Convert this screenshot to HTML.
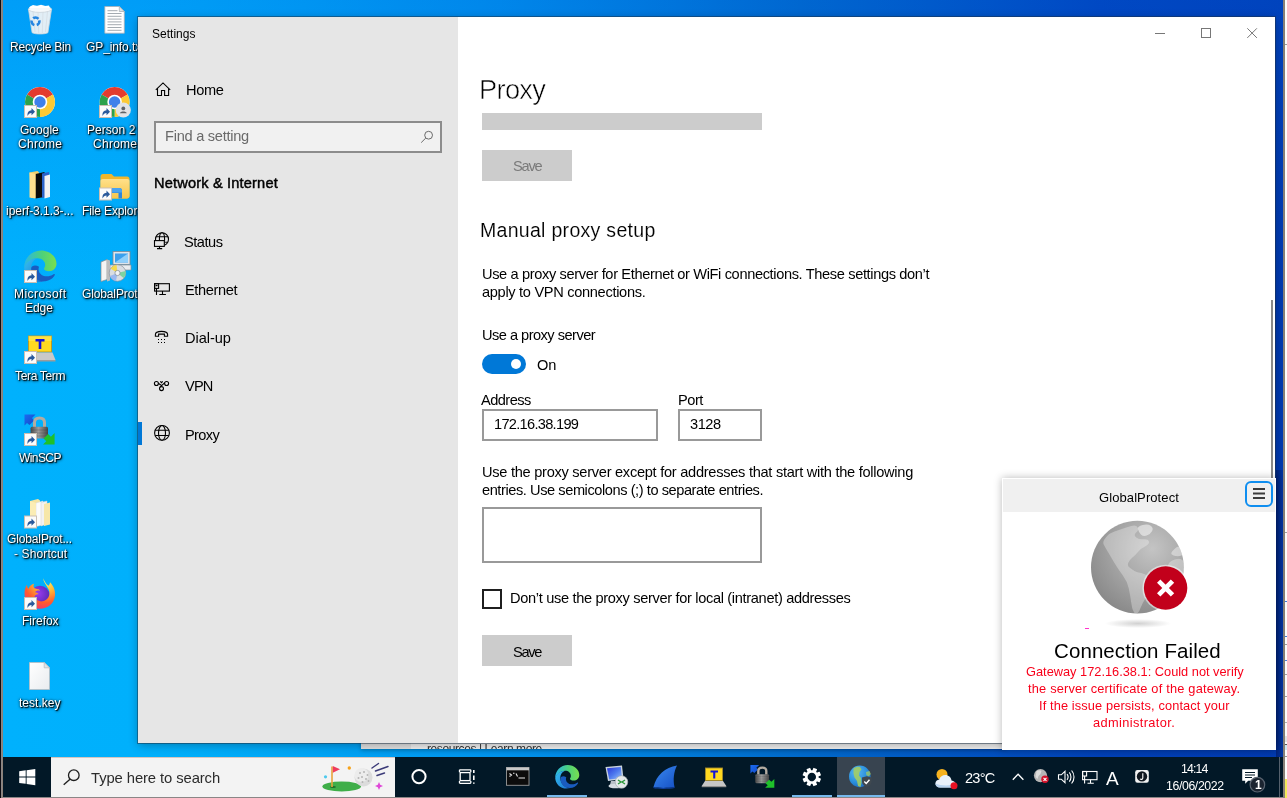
<!DOCTYPE html>
<html lang="en">
<head>
<meta charset="utf-8">
<title>Settings - Proxy</title>
<style>
*{box-sizing:border-box;margin:0;padding:0}
html,body{width:1287px;height:798px;overflow:hidden;background:#8a8686}
#rstrip i{position:absolute;left:0;width:2px;display:block}
#lb{left:0;top:0;width:3px;height:798px;background:linear-gradient(90deg,#0c0a10 0,#0c0a10 1px,#8a8686 1px,#8a8686 2px,#8c8078 2px)}
body{position:relative;font-family:"Liberation Sans",sans-serif;color:#000;font-size:15px}
.a,.t{position:absolute}
.t{white-space:pre;line-height:1;will-change:transform}
svg{position:absolute;overflow:visible}
#desk{position:absolute;left:3px;top:0;width:1280px;height:757px;overflow:hidden;
 background:linear-gradient(180deg,rgba(0,96,232,.24) 0,rgba(0,96,232,.12) 120px,rgba(0,96,232,0) 300px),linear-gradient(90deg,#00b1fd 0px,#00b0fc 135px,#00adf9 197px,#00a5f5 300px,#0092eb 497px,#007cd9 660px,#0069c9 797px,#004ebe 1000px,#0041b8 1097px,#003ab0 1280px)}
#rstrip{left:1283px;top:0;width:4px;height:798px;background:#fdfdfd;border-left:2px solid #888078}
.dl{color:#fff;font-size:12px;text-shadow:1px 1px 1px rgba(0,0,0,.95),1px 1px 3px rgba(0,0,0,.9),0 0 3px rgba(0,0,0,.6)}
#win{left:138px;top:17px;width:1137px;height:726px;background:#fff;box-shadow:0 0 0 1px rgba(30,50,70,.5),0 2px 9px rgba(0,0,0,.3)}
#side{left:138px;top:17px;width:320px;height:726px;background:#e6e6e6}
.box{border:2px solid #999;background:#fff}
.btn{background:#ccc}
#tb{left:3px;top:757px;width:1280px;height:40px;background:#021827}
#pop{left:1002px;top:478px;width:274px;height:272px;background:#fff;box-shadow:0 0 8px rgba(0,0,0,.28)}
</style>
</head>
<body>
<div id="desk">
<svg style="left:0;top:0" width="1280" height="757" viewBox="3 0 1280 757">
 <defs>
  <g id="sc"><rect x="0.5" y="0.5" width="12" height="12" fill="#fbfbfb" stroke="#cbbfb3" stroke-width="1"/><path d="M3.500 11c-.3-3.800 1.300-5.600 4-5.800V3l3.500 3.700-3.500 3.500V8c-1.800.1-3 .9-4 3z" fill="#2a5a9c"/></g>
  <g id="chr"><circle r="15" fill="#fff"/><path d="M0 0L-12.990-7.500A15 15 0 0 1 12.990-7.500z" fill="#e33b2e"/><path d="M0 0L12.990-7.500A15 15 0 0 1 0 15z" fill="#fcc934"/><path d="M0 0L0 15A15 15 0 0 1-12.990-7.500z" fill="#2ca14b"/><path d="M0-7.500H13" stroke="#e33b2e" stroke-width="0"/><circle r="7.300" fill="#fff"/><circle r="5.700" fill="#3f80ea"/></g>
  <linearGradient id="pg" x1="0" y1="0" x2="1" y2="1"><stop offset="0" stop-color="#fff"/><stop offset="1" stop-color="#e9ecef"/></linearGradient>
  <linearGradient id="fy" x1="0" y1="0" x2="0" y2="1"><stop offset="0" stop-color="#ffe08a"/><stop offset="1" stop-color="#f7c64a"/></linearGradient>
 </defs>
 <!-- recycle bin -->
 <path d="M28.500 9.500l3.600 23.200c3 1.700 13 1.700 15.800 0L51.500 9.500z" fill="#edf2f5" fill-opacity=".95" stroke="#cdd6dc" stroke-width=".8"/><path d="M33 11l2 21M38 11.500l.7 21.500M43 11.500l-.7 21.500M47.500 11l-2 21" stroke="#d5dde3" stroke-width=".8"/>
 <ellipse cx="40" cy="9.200" rx="11.600" ry="3.200" fill="#f6f9fb" stroke="#c9d3da" stroke-width=".8"/>
 <path d="M30 6.500l3-1.500 4 1 4-1.200 4 1.200 4-.6 1 2.600H29z" fill="#fff"/>
 <g transform="translate(-4.3 .8)"><circle cx="39.8" cy="20.6" r="3.9" fill="none" stroke="#2585e0" stroke-width="2.6" stroke-dasharray="5.7 2.47" transform="rotate(-15 39.8 20.6)"/></g>
 <!-- GP_info.txt -->
 <path d="M104.800 6.500h14.500l5 5v21.700h-19.500z" fill="#fff" stroke="#a9b0b6" stroke-width=".8"/><path d="M119.300 6.500v5h5z" fill="#dfe3e6" stroke="#a9b0b6" stroke-width=".8"/>
 <path d="M107.500 13.500h14M107.500 16.300h14M107.500 19.100h14M107.500 21.900h14M107.500 24.700h14M107.500 27.500h14M107.500 30.300h14M107.500 10.700h10" stroke="#9aa1a8" stroke-width=".9"/>
 <!-- chrome -->
 <use href="#chr" x="40" y="102"/><use href="#sc" x="24" y="105"/>
 <use href="#chr" x="114.600" y="102"/><use href="#sc" x="99" y="105"/>
 <circle cx="123.300" cy="110" r="7.600" fill="#e1e3e6"/><circle cx="123.300" cy="108.400" r="1.900" fill="#5f6368"/><path d="M119.800 113.300c.5-2.300 6.500-2.300 7 0z" fill="#5f6368"/>
 <!-- iperf folder -->
 <path d="M29.500 172.500l8-1.500 1.500 1.500v25l-8 .5z" fill="#f3cf6b"/><path d="M35.500 174l9-2v25l-9 1.500z" fill="#0b0b0b"/><path d="M42 173.500l7-1.500v24l-7 2z" fill="#2a62c9"/><path d="M44.500 176l5.500-1.500v22.500l-5.500 1.500z" fill="#f2f2f2"/><path d="M29.500 172.500l6 1.500v24.500l-6-1z" fill="#ffe08f"/>
 <!-- file explorer -->
 <path d="M100.500 176.500c0-1.500 1-2.500 2.500-2.500h8.500l2.500 2.500h13c1.500 0 2.500 1 2.500 2.500v17c0 1.500-1 2.500-2.500 2.500h-24c-1.500 0-2.500-1-2.500-2.500z" fill="#f0b62c"/>
 <path d="M100.500 181c0-1.200 1-2 2.200-2h24.600c1.200 0 2.200.8 2.200 2v15c0 1.500-1 2.500-2.500 2.500h-24c-1.500 0-2.500-1-2.500-2.500z" fill="url(#fy)"/>
 <path d="M108 190.500c0-1.500 1-2.500 2.500-2.500h9c1.500 0 2.500 1 2.500 2.500v8h-3.500v-5.500h-7v5.500H108z" fill="#2f86d9"/><path d="M108 190.500c0-1.500 1-2.500 2.500-2.500h9c1.500 0 2.500 1 2.500 2.500v2h-14z" fill="#4aa3ee"/>
 <use href="#sc" x="99" y="187.500"/>
 <!-- edge -->
 <g transform="translate(40 266.200)">
  <defs><linearGradient id="e1" x1="0" y1="0" x2="1" y2="1"><stop offset="0" stop-color="#35c1f1"/><stop offset="1" stop-color="#1b6fd1"/></linearGradient><linearGradient id="e2" x1="0" y1="0" x2="1" y2="0"><stop offset="0" stop-color="#2bb6e6"/><stop offset=".55" stop-color="#4dd17a"/><stop offset="1" stop-color="#7adf4e"/></linearGradient></defs>
  <path d="M-15.800 1.500C-16-8 -8.500-15.800 1-15.800c8.500 0 15.500 6 15.500 13.300 0 4.500-3.500 7.500-7.500 7.500-3 0-5-1-5-2.500 0-1 1.200-1.500 1.200-3.700C5.200-5.200 2-8 -2.500-8c-6 0-10.800 4.500-13.300 9.500z" fill="url(#e2)"/>
  <path d="M-15.800 1.500c2-5.500 7-9.500 13-9.500C-7.500-6-10-1-8.500 5c1.500 6 7 10 13 10.200-2 .5-3.500.6-5 .6C-9.500 15.800-15.500 9-15.800 1.500z" fill="url(#e1)"/>
  <path d="M-8.800 2c-.5 7 4.500 13 12.500 13 5 0 9-2.500 11-6 .5-1-.5-1.500-1.200-1C11 9.800 8 10.500 5 10c-5-1-7.500-5.500-6-9.500C-4-1.500-8.500-1-8.800 2z" fill="#1a5cc0"/>
 </g>
 <use href="#sc" x="24" y="270"/>
 <!-- globalprotect installer -->
 <rect x="113" y="251.500" width="17" height="13" fill="#dfe4ea" stroke="#7c8894" stroke-width=".8"/><rect x="115" y="253.500" width="13" height="9" fill="#3aa0ee"/><path d="M115 262.500l13-9v9z" fill="#8fd0fb"/>
 <path d="M110 265h21v5h-21z" fill="#e9edf0" stroke="#8a949c" stroke-width=".7"/>
 <path d="M101 262l6-2.500v20l-6 2z" fill="#f4f4f4" stroke="#8a8a8a" stroke-width=".7"/><path d="M107 259.500l3 1v20l-3 1z" fill="#bdbdbd"/>
 <circle cx="117.500" cy="273" r="8.300" fill="#d9dde2" stroke="#8c949c" stroke-width=".7"/><path d="M117.500 273l-7-4.500a8.300 8.300 0 0 1 6-3.700z" fill="#f5d94e"/><path d="M117.500 273l8-2a8.300 8.300 0 0 1-2 7z" fill="#7ed3a0"/><path d="M117.500 273l-1.500 8a8.300 8.300 0 0 1-6-5z" fill="#9bb8f0"/><circle cx="117.500" cy="273" r="2.600" fill="#f1f3f5" stroke="#7d868e" stroke-width=".7"/>
 <!-- tera term -->
 <rect x="28.500" y="336" width="23" height="16" fill="#ffd81f" stroke="#b89a2a" stroke-width="1"/><path d="M28.500 336h23v5h-23z" fill="#ffe85a" fill-opacity=".6"/>
 <path d="M35.500 339h9v2.400h-3.200v7.600h-2.600v-7.600h-3.200z" fill="#1212d8"/>
 <path d="M27.500 352.500h25l3 7.500h-31z" fill="#c9c9c9"/><path d="M24.500 360h31v1.500h-31z" fill="#9b9b9b"/>
 <use href="#sc" x="24" y="351"/>
 <!-- winscp -->
 <defs><linearGradient id="lk" x1="0" y1="0" x2="1" y2="0"><stop offset="0" stop-color="#4a4a4a"/><stop offset=".45" stop-color="#9c9c9c"/><stop offset="1" stop-color="#484848"/></linearGradient><linearGradient id="ba" x1="0" y1="0" x2="1" y2="1"><stop offset="0" stop-color="#1c6cf0"/><stop offset="1" stop-color="#1148c8"/></linearGradient></defs>
 <g id="wscp"><path d="M24.5 414.500h11l-3.500 3.500 2 2.500-4.500 4.500-2.500-2-2.500 2.600z" fill="url(#ba)"/>
 <path d="M34.500 427.500v-5c0-3.200 2.200-4.500 5-4.500s5 1.300 5 4.500v5" fill="none" stroke="#b3aba1" stroke-width="3"/>
 <rect x="30.600" y="426.700" width="17.400" height="11.800" rx="1.500" fill="url(#lk)"/><path d="M30.600 430h17.400M30.600 433h17.400M30.600 436h17.400" stroke="#333" stroke-width=".6" stroke-opacity=".45"/>
 <path d="M54.600 444.600h-11.600l3.300-3.300-2.800-2.800 4.600-4.600 2.800 2.800 3.700-3.700z" fill="#1fc02a"/></g>
 <use href="#sc" x="24" y="433"/>
 <!-- globalprot folder shortcut -->
 <path d="M30 501l8-2 2 1.500v24l-10 1.500z" fill="#f5e3a0"/><path d="M36 503l7-2v24l-7 1.500z" fill="#fbfbfb" stroke="#d7d7d7" stroke-width=".5"/><path d="M41 502.500l6-1.500v23l-6 2z" fill="#f2f2f2" stroke="#d0d0d0" stroke-width=".5"/><path d="M44 504l6-1.500v22l-6 1.500z" fill="#f7e7a8"/><path d="M30 501l6 2v23l-6-.5z" fill="#fbedb5"/>
 <use href="#sc" x="24" y="515.500"/>
 <!-- firefox -->
 <g transform="translate(40 593.800)">
  <defs><radialGradient id="f1" cx=".7" cy=".1" r="1"><stop offset="0" stop-color="#fff36a"/><stop offset=".35" stop-color="#ffb534"/><stop offset=".7" stop-color="#ff5b2e"/><stop offset="1" stop-color="#f2317a"/></radialGradient><radialGradient id="f2" cx=".4" cy=".4" r=".6"><stop offset="0" stop-color="#9a3bf0"/><stop offset="1" stop-color="#5d2bb8"/></radialGradient></defs>
  <circle cx="0" cy="1.500" r="9.500" fill="url(#f2)"/>
  <path d="M3-15.500c2 3 2.500 5.500 5.500 7.500 1.500-1.500 1.500-3.500 1.500-3.500 4 4 5.500 9 5 13.500C14 10 7.500 15 0 15-8.500 15-15.500 8.500-15.500 0c0-4 1-7 2.500-9 0 1.500.5 3 1.500 4 1-3 3.500-4.500 5.500-5-1 2-.5 3.500.5 4.500 2 1 5 .5 5.500 2.500-2-.5-4 0-5 1.500 2 0 3 1 3.500 2-1.500 0-3.500.5-4 2.500 1.500 3.500 5 5 8 4.500 4-.5 7-4 7-8 0-5.500-5-8-6.500-15z" fill="url(#f1)"/>
 </g>
 <use href="#sc" x="24" y="597"/>
 <!-- test.key -->
 <path d="M29.500 662.500h14.700l5.300 5.300v21.700h-20z" fill="url(#pg)" stroke="#b9bec3" stroke-width=".8"/><path d="M44.200 662.500v5.300h5.300z" fill="#e1e4e7" stroke="#b9bec3" stroke-width=".8"/>
</svg>
<span class="t dl" style="left:6.68px;top:41.34px;letter-spacing:-0.22px">Recycle Bin</span>
<span class="t dl" style="left:82.88px;top:41.34px;letter-spacing:-0.1px">GP_info.txt</span>
<span class="t dl" style="left:16.98px;top:123.64px;letter-spacing:0.02px">Google</span>
<span class="t dl" style="left:14.78px;top:138.24px;letter-spacing:0.27px">Chrome</span>
<span class="t dl" style="left:84.48px;top:123.64px;letter-spacing:0.04px">Person 2 -</span>
<span class="t dl" style="left:89.58px;top:138.24px;letter-spacing:0.27px">Chrome</span>
<span class="t dl" style="left:3.28px;top:205.34px;letter-spacing:-0.04px">iperf-3.1.3-...</span>
<span class="t dl" style="left:79.48px;top:205.34px;letter-spacing:-0.13px">File Explorer</span>
<span class="t dl" style="left:10.68px;top:287.64px;letter-spacing:0.43px">Microsoft</span>
<span class="t dl" style="left:22.28px;top:302.24px;letter-spacing:-0.07px">Edge</span>
<span class="t dl" style="left:78.88px;top:287.64px;letter-spacing:-0.13px">GlobalProt...</span>
<span class="t dl" style="left:12.28px;top:370.04px;letter-spacing:-0.33px">Tera Term</span>
<span class="t dl" style="left:15.78px;top:451.64px;letter-spacing:-0.58px">WinSCP</span>
<span class="t dl" style="left:4.28px;top:533.44px;letter-spacing:-0.13px">GlobalProt...</span>
<span class="t dl" style="left:10.68px;top:548.04px;letter-spacing:0.12px">- Shortcut</span>
<span class="t dl" style="left:18.78px;top:615.24px;letter-spacing:-0.01px">Firefox</span>
<span class="t dl" style="left:16.28px;top:697.44px;letter-spacing:0.02px">test.key</span>
</div>
<div id="rstrip" class="a"><i style="top:44px;height:1px;background:#9a9a9a"></i><i style="top:532px;height:1px;background:#a0a0a0"></i><i style="top:601px;height:1px;background:#3c78d8"></i><i style="top:636px;height:1px;background:#3c78d8"></i><i style="top:644px;height:1px;background:#9a9a9a"></i><i style="top:660px;height:1px;background:#4a80d8"></i><i style="top:674px;height:1px;background:#a0a0a0"></i><i style="top:696px;height:1px;background:#a0a0a0"></i><i style="top:722px;height:1px;background:#b0b0b0"></i><i style="top:736px;height:6px;background:#e4e4e4"></i><i style="top:744px;height:1px;background:#555"></i><i style="top:745px;height:5px;background:#cfeaf2"></i><i style="top:756px;height:1px;background:#999"></i><i style="top:779px;height:19px;background:#f4ec5a"></i></div>
<div id="lb" class="a"></div>

<!-- window behind -->
<div class="a" style="left:361px;top:735px;width:645px;height:14px;background:#f0f0f0;box-shadow:0 1px 4px rgba(0,0,0,.3)"></div>
<div class="a" style="left:361px;top:735px;width:50px;height:14px;background:#e1e1e1"></div>
<div class="a" style="left:361px;top:743px;width:645px;height:6px;overflow:hidden"><div class="a" style="left:-361px;top:-743px"><span class="t" style="left:427.28px;top:742.84px;font-size:12px;letter-spacing:-0.41px;color:#333">resources | Learn more</span></div></div>

<!-- SETTINGS WINDOW -->
<div id="win" class="a"></div>
<div id="side" class="a"></div>
<span class="t" style="left:151.58px;top:28.34px;font-size:12px;letter-spacing:0.01px;color:#000">Settings</span>
<!-- caption buttons -->
<svg style="left:1150px;top:24px" width="112" height="18" viewBox="0 0 112 18" fill="none" stroke="#777" stroke-width="1">
 <path d="M5 9.5h10"/><rect x="51.5" y="4.5" width="9" height="9"/><path d="M97.3 4.3l9.6 9.6M106.9 4.3l-9.6 9.6"/>
</svg>
<span class="t" style="left:185.52px;top:83.34px;font-size:14.6px;letter-spacing:-0.34px;color:#000">Home</span>
<div class="a" style="left:154px;top:121px;width:288px;height:32px;border:2px solid #8c8c8c;background:#f1f1f1"></div>
<span class="t" style="left:165.42px;top:129.14px;font-size:14.6px;letter-spacing:-0.26px;color:#6a6a6a">Find a setting</span>
<svg style="left:0;top:0" width="1287" height="798" viewBox="0 0 1287 798" fill="none" stroke="#000" stroke-width="1.1" stroke-linejoin="miter">
 <!-- home -->
 <path d="M155.8 89.8L163 82.9l7.2 6.9M157.5 88.6v6.9h4v-5h3.1v5h4v-6.9"/>
 <!-- search magnifier -->
 <g stroke="#6a6a6a" stroke-width="1"><circle cx="428.6" cy="135.2" r="3.9"/><path d="M425.8 138l-4.6 4.6"/></g>
 <!-- status -->
 <circle cx="162" cy="239.3" r="6.5"/><ellipse cx="162" cy="239.3" rx="2.6" ry="6.5"/><path d="M156 236.8h12M165.2 242.3h2.8"/>
 <rect x="154.5" y="240.6" width="9.8" height="5.8" fill="#e6e6e6"/><path d="M159.5 246.4v2.2M157 248.6h5.2"/>
 <!-- ethernet -->
 <rect x="154.6" y="283.7" width="14.8" height="7.4"/><rect x="154.6" y="283.7" width="4" height="4.7"/><path d="M155.6 285.6h2M156.5 288.4v6.6M162.5 291.1v3.4M159.3 294.5h6.6"/>
 <!-- dial-up -->
 <path d="M155.4 336.2v-1.6c0-2 3-3.2 6.1-3.2s6.100 1.200 6.100 3.200v1.600h-3.2v-2.100h-5.800v2.100z"/>
 <g fill="#000" stroke="none"><rect x="158" y="339" width="1" height="1"/><rect x="161" y="339" width="1" height="1"/><rect x="164" y="339" width="1" height="1"/><rect x="158" y="342" width="1" height="1"/><rect x="161" y="342" width="1" height="1"/><rect x="164" y="342" width="1" height="1"/></g>
 <!-- vpn -->
 <circle cx="156.4" cy="383.5" r="2"/><circle cx="166.6" cy="383.5" r="2"/><circle cx="161.5" cy="388.6" r="2"/>
 <path d="M158.300 383.300l3.200 2.200M164.800 382.600l-4.800 4.600M160.300 381.300l1.200 1.400 1.200-1.400"/>
 <!-- proxy globe -->
 <circle cx="162" cy="432.900" r="7.400"/><ellipse cx="162" cy="432.900" rx="3.500" ry="7.400"/><path d="M155.200 430.300h13.600M155.200 435.500h13.600"/>
</svg>
<span class="t" style="left:153.62px;top:176.14px;font-size:14.6px;letter-spacing:0.17px;color:#000;-webkit-text-stroke:0.45px #000">Network &amp; Internet</span>
<span class="t" style="left:184.32px;top:235.14px;font-size:14.6px;letter-spacing:-0.49px;color:#000">Status</span>
<span class="t" style="left:184.52px;top:283.34px;font-size:14.6px;letter-spacing:-0.38px;color:#000">Ethernet</span>
<span class="t" style="left:184.52px;top:331.44px;font-size:14.6px;letter-spacing:-0.05px;color:#000">Dial-up</span>
<span class="t" style="left:184.72px;top:379.44px;font-size:14.6px;letter-spacing:-0.85px;color:#000">VPN</span>
<div class="a" style="left:138px;top:422px;width:4px;height:23px;background:#0078d7"></div>
<span class="t" style="left:184.52px;top:427.54px;font-size:14.6px;letter-spacing:-0.63px;color:#000">Proxy</span>

<!-- content -->
<span class="t" style="left:478.67px;top:75.78px;font-size:27.2px;letter-spacing:-0.65px;color:#000;-webkit-text-stroke:0.55px #fff">Proxy</span>
<div class="a btn" style="left:482px;top:113px;width:280px;height:17px"></div>
<div class="a btn" style="left:482px;top:150px;width:90px;height:31px"></div>
<span class="t" style="left:512.52px;top:158.94px;font-size:14.6px;letter-spacing:-1.22px;color:#7a7a7a">Save</span>
<span class="t" style="left:480.43px;top:221.39px;font-size:19.5px;letter-spacing:0.3px;color:#000;-webkit-text-stroke:0.12px #fff">Manual proxy setup</span>
<span class="t" style="left:481.72px;top:267.44px;font-size:14.6px;letter-spacing:-0.36px;color:#000">Use a proxy server for Ethernet or WiFi connections. These settings don’t</span>
<span class="t" style="left:481.72px;top:285.34px;font-size:14.6px;letter-spacing:-0.31px;color:#000">apply to VPN connections.</span>
<span class="t" style="left:481.72px;top:328.34px;font-size:14.6px;letter-spacing:-0.52px;color:#000">Use a proxy server</span>
<div class="a" style="left:482px;top:354px;width:44px;height:20px;border-radius:10px;background:#0078d7"></div>
<div class="a" style="left:511px;top:359px;width:10px;height:10px;border-radius:5px;background:#fff"></div>
<span class="t" style="left:537.32px;top:357.94px;font-size:14.6px;letter-spacing:-0.06px;color:#000">On</span>
<span class="t" style="left:481.42px;top:393.04px;font-size:14.6px;letter-spacing:-0.54px;color:#000">Address</span>
<span class="t" style="left:677.92px;top:393.04px;font-size:14.6px;letter-spacing:-0.45px;color:#000">Port</span>
<div class="a box" style="left:482px;top:409px;width:176px;height:32px"></div>
<div class="a box" style="left:678px;top:409px;width:84px;height:32px"></div>
<span class="t" style="left:494.12px;top:417.14px;font-size:14.6px;letter-spacing:-0.7px;color:#000">172.16.38.199</span>
<span class="t" style="left:689.62px;top:417.14px;font-size:14.6px;letter-spacing:-0.49px;color:#000">3128</span>
<span class="t" style="left:481.72px;top:465.14px;font-size:14.6px;letter-spacing:-0.27px;color:#000">Use the proxy server except for addresses that start with the following</span>
<span class="t" style="left:481.72px;top:483.24px;font-size:14.6px;letter-spacing:-0.43px;color:#000">entries. Use semicolons (;) to separate entries.</span>
<div class="a box" style="left:482px;top:507px;width:280px;height:56px"></div>
<div class="a" style="left:482px;top:589px;width:20px;height:20px;border:2px solid #1f1f1f;background:#fff"></div>
<span class="t" style="left:509.92px;top:591.04px;font-size:14.6px;letter-spacing:-0.33px;color:#000">Don’t use the proxy server for local (intranet) addresses</span>
<div class="a btn" style="left:482px;top:635px;width:90px;height:31px"></div>
<span class="t" style="left:512.52px;top:644.64px;font-size:14.6px;letter-spacing:-1.29px;color:#000">Save</span>
<!-- scrollbar thumb -->
<div class="a" style="left:1271px;top:300px;width:2px;height:178px;background:#8a8a8a"></div>

<!-- GLOBALPROTECT POPUP -->
<div class="a" style="left:1276px;top:470px;width:7px;height:287px;background:linear-gradient(90deg,rgba(0,0,40,.38),rgba(0,0,40,.1))"></div>
<div id="pop" class="a"></div>
<div class="a" style="left:1003px;top:479px;width:272px;height:33px;background:#f0f0f0"></div>
<span class="t" style="left:1098.72px;top:490.5px;font-size:13px;letter-spacing:0.09px;color:#000">GlobalProtect</span>
<div class="a" style="left:1245px;top:481px;width:28px;height:26px;border:2px solid #0f8ef0;border-radius:6px;background:#f0f0f0"></div>
<div class="a" style="left:1253px;top:488px;width:12px;height:2px;background:#3c3c3c;box-shadow:0 4.5px 0 #3c3c3c,0 9px 0 #3c3c3c"></div>
<svg style="left:1080px;top:514px" width="120" height="120" viewBox="1080 514 120 120">
 <defs>
  <radialGradient id="gg" cx="0.66" cy="0.3" r="0.85"><stop offset="0" stop-color="#c4c4c4"/><stop offset="0.4" stop-color="#aaa"/><stop offset="1" stop-color="#828282"/></radialGradient>
  <radialGradient id="gs" cx="0.5" cy="0.5" r="0.5"><stop offset="0" stop-color="#999" stop-opacity=".45"/><stop offset="1" stop-color="#999" stop-opacity="0"/></radialGradient>
  <clipPath id="gc"><circle cx="1137.4" cy="567.2" r="46.4"/></clipPath>
 </defs>
 <ellipse cx="1138" cy="623.5" rx="33" ry="4.500" fill="url(#gs)"/>
 <circle cx="1137.4" cy="567.2" r="46.4" fill="url(#gg)"/>
 <g clip-path="url(#gc)" fill="#fff">
  <path fill-opacity=".3" d="M1108.3 534.7Q1110.1 533.2 1118.2 530.3Q1126.2 527.5 1131.2 526.1Q1136.2 524.7 1137.7 527.4Q1139.2 530.1 1136.2 532.6Q1133.2 535.2 1136.2 537.4Q1139.2 539.6 1143.7 539.2Q1148.2 538.8 1148.9 541.5Q1149.6 544.2 1145.4 546.2Q1141.2 548.2 1138.2 551.7Q1135.2 555.2 1132.2 557.7Q1129.2 560.2 1128.2 562.9Q1127.2 565.6 1129.5 567.6Q1131.8 569.6 1134.5 570.9Q1137.2 572.3 1141.2 573.1Q1145.2 573.9 1148.2 576.6Q1151.2 579.3 1150.7 585.3Q1150.2 591.3 1146.2 597.3Q1142.2 603.3 1140.2 608.8Q1138.2 614.4 1135.4 613.4Q1132.6 612.4 1131.4 603.8Q1130.2 595.3 1128.7 588.3Q1127.2 581.3 1122.7 575.3Q1118.2 569.2 1114.6 563.2Q1111.1 557.2 1108.1 552.2Q1105.1 547.2 1103.8 544.7Q1102.5 542.2 1104.5 539.2Q1106.5 536.2 1108.3 534.7z"/>
  <path fill-opacity=".5" d="M1137.9 529.1Q1137.2 526.1 1142.7 524.9Q1148.2 523.7 1151.0 525.9Q1153.8 528.1 1152.0 531.3Q1150.2 534.6 1146.7 535.6Q1143.2 536.6 1140.9 534.4Q1138.6 532.1 1137.9 529.1z"/>
  <path fill-opacity=".4" d="M1171.5 552.6Q1172.3 550.8 1175.3 548.2Q1178.3 545.6 1180.5 547.6Q1182.7 549.6 1183.0 552.6Q1183.3 555.6 1179.8 556.1Q1176.3 556.6 1173.5 555.5Q1170.7 554.4 1171.5 552.6z"/>
  <path fill-opacity=".3" d="M1168.3 564.4Q1169.3 561.6 1174.8 559.6Q1180.3 557.6 1182.8 560.4Q1185.3 563.2 1185.3 571.3Q1185.3 579.3 1178.8 577.3Q1172.3 575.3 1169.8 571.3Q1167.3 567.2 1168.3 564.4z"/>
 </g>
 <circle cx="1165.600" cy="588" r="23.200" fill="#fff" fill-opacity=".5"/>
 <circle cx="1165.600" cy="588" r="21.700" fill="#c2001b"/>
 <path d="M1158.700 581.100l13.800 13.800M1172.500 581.100l-13.800 13.800" stroke="#fff" stroke-width="4.800" fill="none"/>
 <rect x="1085" y="628" width="4" height="1" fill="#f3c"/>
</svg>
<span class="t" style="left:1054.07px;top:640.55px;font-size:20.5px;letter-spacing:0.09px;color:#000">Connection Failed</span>
<span class="t" style="left:1025.53px;top:666.46px;font-size:12.8px;letter-spacing:0px;color:#f8001a">Gateway 172.16.38.1: Could not verify</span>
<span class="t" style="left:1028.23px;top:683.46px;font-size:12.8px;letter-spacing:0.2px;color:#f8001a">the server certificate of the gateway.</span>
<span class="t" style="left:1038.73px;top:700.36px;font-size:12.8px;letter-spacing:0.12px;color:#f8001a">If the issue persists, contact your</span>
<span class="t" style="left:1093.33px;top:717.36px;font-size:12.8px;letter-spacing:0.38px;color:#f8001a">administrator.</span>

<!-- TASKBAR -->
<div id="tb" class="a"></div>
<div class="a" style="left:51px;top:757px;width:344px;height:40px;background:#f3f3f3;border-top:1px solid #d6c6c0"></div>
<span class="t" style="left:90.61px;top:770.77px;font-size:14.8px;letter-spacing:-0.09px;color:#2b2b2b">Type here to search</span>
<svg style="left:0;top:0" width="1287" height="798" viewBox="0 0 1287 798">
 <!-- start logo -->
 <path d="M19.200 771.200l6.500-.9v6.300h-6.500zM26.600 770.200l8.700-1.300v7.700h-8.700zM19.200 777.500h6.500v6.300l-6.500-.9zM26.600 777.500h8.700v7.700l-8.700-1.300z" fill="#fff"/>
 <!-- search magnifier -->
 <circle cx="73.800" cy="775.200" r="5.300" fill="none" stroke="#1f1f1f" stroke-width="1.300"/><path d="M70 779.300l-6.300 5.500" stroke="#1f1f1f" stroke-width="1.400"/>
 <!-- golf highlight -->
 <ellipse cx="341.700" cy="786.500" rx="19.300" ry="5" fill="#3fae49"/><ellipse cx="333" cy="787" rx="3" ry="1" fill="#1f6e2a"/>
 <path d="M332 766.500v20.500" stroke="#e8a33a" stroke-width="1.600"/><path d="M332.800 766l7.200 3.300-7.200 3.500z" fill="#ef3a5d"/>
 <circle cx="325.500" cy="776.800" r="1.600" fill="#4cc9ee"/><circle cx="349.300" cy="768" r="1.700" fill="#f6a21b"/>
 <circle cx="363.500" cy="777.400" r="9" fill="#dcdcdc"/><circle cx="361.500" cy="775" r="7" fill="#ececec"/>
 <g fill="#b5b5b5"><circle cx="360" cy="773" r="1"/><circle cx="364" cy="772" r="1"/><circle cx="367.500" cy="775" r="1"/><circle cx="362" cy="777" r="1"/><circle cx="366" cy="779" r="1"/><circle cx="358.500" cy="778" r="1"/><circle cx="362.500" cy="782" r="1"/><circle cx="368.500" cy="781" r=".9"/></g>
 <path d="M372 768l6.500-4.500M375.500 771l12.500-4.500M377 775.500l7.500-2.500" stroke="#3b3a78" stroke-width="1.500" stroke-linecap="round"/>
 <path d="M379 782l1.200 2.800 2.800 1.200-2.800 1.200-1.200 2.800-1.200-2.800-2.800-1.200 2.800-1.200z" fill="#e048d8"/>
 <!-- cortana -->
 <circle cx="419" cy="776.600" r="6.600" fill="none" stroke="#fff" stroke-width="2"/>
 <!-- task view -->
 <g fill="none" stroke="#fff" stroke-width="1.300"><path d="M459.500 769.800h11.300M459.500 783.300h11.300"/><rect x="460.200" y="772.600" width="9.800" height="8"/><path d="M473.800 770v3M473.800 775.500v4.500M473.800 782.500v1.200" stroke-width="1.600"/><path d="M459.500 772.200v-2.400M470.800 772.200v-2.400M459.500 781v2.300M470.800 781v2.300"/></g>
 <!-- cmd -->
 <rect x="506.500" y="767.500" width="22.500" height="17.800" fill="#0c0c0c" stroke="#9a9a9a" stroke-width=".9"/><path d="M506.500 767.500h22.500v2.800h-22.500z" fill="#c9c9c9"/>
 <path d="M509.500 773.500l2 1.500-2 1.500M513 773.200h1.500M516 773.500l1.500 3M518.500 778h6.500" stroke="#e8e8e8" stroke-width="1.100" fill="none"/>
 <!-- edge -->
 <g transform="translate(567 776.800) scale(.745)">
  <path d="M-15.800 1.500C-16-8 -8.500-15.800 1-15.800c8.500 0 15.500 6 15.500 13.300 0 4.500-3.500 7.500-7.500 7.500-3 0-5-1-5-2.500 0-1 1.200-1.500 1.200-3.700C5.200-5.200 2-8 -2.500-8c-6 0-10.800 4.500-13.300 9.500z" fill="url(#e2)"/>
  <path d="M-15.800 1.500c2-5.500 7-9.500 13-9.500C-7.500-6-10-1-8.500 5c1.500 6 7 10 13 10.200-2 .5-3.500.6-5 .6C-9.500 15.800-15.500 9-15.800 1.500z" fill="url(#e1)"/>
  <path d="M-8.800 2c-.5 7 4.500 13 12.500 13 5 0 9-2.500 11-6 .5-1-.5-1.500-1.200-1C11 9.800 8 10.500 5 10c-5-1-7.500-5.500-6-9.500C-4-1.500-8.500-1-8.800 2z" fill="#1a5cc0"/>
 </g>
 <rect x="547" y="795" width="40" height="2" fill="#76b9ed"/>
 <!-- rdp -->
 <defs><linearGradient id="rd" x1="0" y1="0" x2="1" y2="1"><stop offset="0" stop-color="#2a35d8"/><stop offset=".5" stop-color="#4c78ee"/><stop offset="1" stop-color="#9cc4f8"/></linearGradient></defs>
 <path d="M605.500 767l16.500-1.500 1.500 13.500-15.500 2z" fill="#c9d3de"/><path d="M607 768.200l13.800-1.200 1.200 11-12.800 1.600z" fill="url(#rd)"/>
 <path d="M611 781h8l1 4h-10z" fill="#b9c0c8"/><ellipse cx="615.500" cy="786" rx="7" ry="2.300" fill="#d5dbe1"/>
 <circle cx="621.500" cy="782" r="6.300" fill="#e4e8ea" stroke="#9aa4a8" stroke-width=".6"/><path d="M618 780l3 2-3 2M625 780l-3 2 3 2" stroke="#2c9a3a" stroke-width="1.400" fill="none"/>
 <!-- wireshark -->
 <defs><linearGradient id="ws" x1="0" y1="0" x2="1" y2="1"><stop offset="0" stop-color="#3b8af0"/><stop offset="1" stop-color="#1550c4"/></linearGradient></defs>
 <path d="M677 765.500c-12 2-20.500 9.500-23.500 21.500 4 1.200 15 1.200 21 0-1.500-7.500-.8-15 2.500-21.500z" fill="url(#ws)"/><path d="M653.500 787c4 1.200 15 1.200 21 0l.3 1c-6 1.200-17.500 1.200-21.600 0z" fill="#0e3fa0"/>
 <!-- tera term -->
 <rect x="705.500" y="768" width="17" height="12.500" fill="#ffd81f" stroke="#a58a2a" stroke-width=".9"/><path d="M710.500 770.500h7.500v2h-2.700v6h-2.100v-6h-2.700z" fill="#1212d8"/>
 <path d="M705 781h18l3.300 5h-24.600z" fill="#c6c6c6"/><path d="M701.700 786h24.600v1.200h-24.600z" fill="#8f8f8f"/>
 <!-- winscp -->
 <use href="#wscp" transform="translate(750.4 765) scale(.795 .757) translate(-24.5 -414.5)"/>
 <!-- settings gear -->
 <g transform="translate(811.8 777) rotate(22.5)"><g fill="#fff"><rect x="-2" y="-9.2" width="4" height="18.4" rx=".5"/><rect x="-2" y="-9.2" width="4" height="18.4" rx=".5" transform="rotate(45)"/><rect x="-2" y="-9.2" width="4" height="18.4" rx=".5" transform="rotate(90)"/><rect x="-2" y="-9.2" width="4" height="18.4" rx=".5" transform="rotate(135)"/><circle r="6.8"/></g><circle r="4.2" fill="#021827"/></g>
 <rect x="792" y="795" width="40" height="2" fill="#76b9ed"/>
 <!-- globalprotect active -->
 <rect x="837" y="757" width="48" height="40" fill="#384450"/><rect x="837" y="795" width="48" height="2" fill="#76b9ed"/>
 <defs><radialGradient id="gl" cx=".35" cy=".3" r=".8"><stop offset="0" stop-color="#5ab8f0"/><stop offset=".6" stop-color="#2a8fdc"/><stop offset="1" stop-color="#1a62b8"/></radialGradient></defs>
 <circle cx="859.8" cy="776.4" r="10.8" fill="url(#gl)"/>
 <path d="M853.5 768.5c2-1.5 4.5-2 6.500-1.500l1.500 2.500-2 2.500-.5 3.500 2 2.500.5 4.500-1 4.500-2.500-1-1-5-2.500-3.500-1-4z" fill="#a9cf5a" fill-opacity=".85"/><path d="M866 772l3.500-1 1.300 3-2 2.500-2.500-1.500z" fill="#a9cf5a" fill-opacity=".7"/>
 <path d="M862 777.5l4.800-1.200 4.800 1.200v4.200c0 2.600-2.200 4.300-4.800 5.300-2.600-1-4.800-2.700-4.800-5.300z" fill="#3f4850"/><path d="M864.300 781.500l1.900 1.900 3.300-3.700" stroke="#fff" stroke-width="1.400" fill="none"/>
 <!-- weather -->
 <circle cx="942" cy="774.500" r="5.500" fill="#f6b21f"/>
 <path d="M940 787.500c-2.800 0-4.600-1.800-4.600-4s1.600-3.800 3.900-4c.8-2.800 3.200-4.500 6-4.500 3.200 0 5.800 2.300 6.200 5.400 2.300.2 4 1.700 4 3.600 0 2-1.700 3.500-4 3.500z" fill="#e9f1fa"/><path d="M940 787.500c-2.800 0-4.600-1.800-4.600-4 5 2.500 15 2.500 20 .500 0 2-1.700 3.500-4 3.500z" fill="#b9d4f0"/>
 <circle cx="954" cy="785.700" r="3.500" fill="#e81123"/>
 <!-- chevron -->
 <path d="M1012.800 779.800l5.300-5.600 5.300 5.600" stroke="#fff" stroke-width="1.300" fill="none"/>
 <!-- gp tray -->
 <circle cx="1040.500" cy="775.600" r="6.600" fill="#b5b5b5"/><path d="M1036.500 771c2-1 4-1 5 0l-1 3-2 2-1 3-2-2z" fill="#dcdcdc"/><circle cx="1045" cy="779.300" r="3.700" fill="#d3122a"/><path d="M1043.500 777.800l3 3M1046.500 777.800l-3 3" stroke="#fff" stroke-width="1.100"/>
 <!-- speaker -->
 <path d="M1058.500 774.800h2.800l3.700-3.500v11.400l-3.700-3.500h-2.800z" fill="none" stroke="#fff" stroke-width="1.100"/><path d="M1067 774.200c1.200 1.500 1.200 4.100 0 5.600M1069.300 772.300c2.200 2.600 2.200 6.800 0 9.400M1071.600 770.500c3.200 3.600 3.200 9.400 0 13" stroke="#fff" stroke-width="1.100" fill="none"/>
 <!-- network -->
 <g fill="none" stroke="#fff" stroke-width="1.100"><rect x="1082.600" y="771.500" width="14.400" height="8.200"/><rect x="1082.600" y="771.500" width="4" height="4.500"/><path d="M1084.600 776v7.500M1090.500 779.700v3.500M1087.500 783.300h6.300"/></g>
 <!-- IME -->
 <rect x="1135.200" y="770" width="13.600" height="12.800" rx="2.200" fill="#f2f2f2"/><circle cx="1142" cy="776.400" r="5.200" fill="#111820"/><path d="M1142.800 773.200v4.800c0 1.500-1.800 1.800-2.800.9" stroke="#fff" stroke-width="1.100" fill="none"/>
 <!-- notification -->
 <path d="M1242.200 769.200h15.600v11.600h-9.600l-3 3v-3h-3z" fill="#fff"/><path d="M1245 772.500h10M1245 775h10M1245 777.500h7" stroke="#021827" stroke-width="1"/>
 <circle cx="1257.400" cy="784.700" r="7.300" fill="#1b2430" stroke="#5a6470" stroke-width="1.200"/>
 <!-- show desktop divider -->
 <path d="M1279.500 757v40" stroke="#55606c" stroke-width="1"/>
</svg>
<span class="t" style="left:1254.600px;top:778.800px;font-size:12px;font-weight:700;color:#fff">1</span>
<span class="t" style="left:964.82px;top:770.94px;font-size:14.6px;letter-spacing:-0.77px;color:#fff">23°C</span>
<span class="t" style="left:1105.66px;top:768.82px;font-size:19px;letter-spacing:0px;color:#fff">A</span>
<span class="t" style="left:1181.06px;top:762.59px;font-size:12.3px;letter-spacing:-0.83px;color:#fff">14:14</span>
<span class="t" style="left:1166.46px;top:780.09px;font-size:12.3px;letter-spacing:-0.38px;color:#fff">16/06/2022</span>
</body>
</html>
